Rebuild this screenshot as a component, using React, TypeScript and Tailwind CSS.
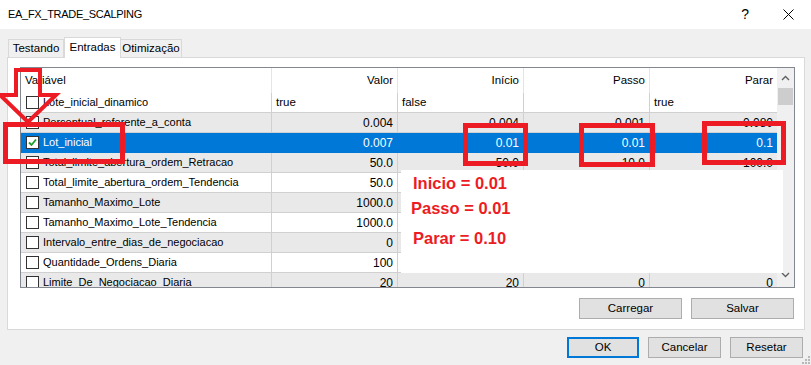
import React from "react";

type Row = {
  name: string;
  valor: string;
  inicio: string;
  passo: string;
  parar: string;
  bool?: boolean;
  checked?: boolean;
};

const ROWS: Row[] = [
  { name: "Lote_inicial_dinamico", valor: "true", inicio: "false", passo: "", parar: "true", bool: true },
  { name: "Percentual_referente_a_conta", valor: "0.004", inicio: "0.004", passo: "0.001", parar: "0.080" },
  { name: "Lot_inicial", valor: "0.007", inicio: "0.01", passo: "0.01", parar: "0.1", checked: true },
  { name: "Total_limite_abertura_ordem_Retracao", valor: "50.0", inicio: "50.0", passo: "10.0", parar: "100.0" },
  { name: "Total_limite_abertura_ordem_Tendencia", valor: "50.0", inicio: "50.0", passo: "10.0", parar: "100.0" },
  { name: "Tamanho_Maximo_Lote", valor: "1000.0", inicio: "1000.0", passo: "100.0", parar: "2000.0" },
  { name: "Tamanho_Maximo_Lote_Tendencia", valor: "1000.0", inicio: "1000.0", passo: "100.0", parar: "2000.0" },
  { name: "Intervalo_entre_dias_de_negociacao", valor: "0", inicio: "0", passo: "0", parar: "0" },
  { name: "Quantidade_Ordens_Diaria", valor: "100", inicio: "100", passo: "10", parar: "200" },
  { name: "Limite_De_Negociacao_Diaria", valor: "20", inicio: "20", passo: "0", parar: "0" },
];

function Checkbox({ checked }: { checked?: boolean }) {
  return (
    <div className="w-[13px] h-[13px] shrink-0 bg-white border border-[#333333] flex items-center justify-center">
      {checked && (
        <svg width="9" height="9" viewBox="0 0 9 9">
          <path d="M1 4.5 L3.5 7 L8 1.5" fill="none" stroke="#1e9e2a" strokeWidth="1.8" />
        </svg>
      )}
    </div>
  );
}

function Btn({ label, w, primary }: { label: string; w: string; primary?: boolean }) {
  return (
    <div
      className={`${w} h-[21px] flex items-center justify-center bg-[#e1e1e1] text-[11.5px] text-black ${
        primary ? "border-2 border-[#0078d7]" : "border border-[#adadad]"
      }`}
    >
      {label}
    </div>
  );
}

function ListView() {
  return (
    <div className="w-[775px] h-[221px] border border-[#828790] bg-white flex overflow-hidden">
      <div className="w-[756px] flex flex-col overflow-hidden">
        <div className="grid grid-cols-[251px_126px_126px_126px_127px] h-[25px] shrink-0 text-[11.5px]">
          <div className="border-r border-[#e5e5e5] pl-[4px] flex items-center">Variável</div>
          <div className="border-r border-[#e5e5e5] pr-[4px] flex items-center justify-end">Valor</div>
          <div className="border-r border-[#e5e5e5] pr-[4px] flex items-center justify-end">Início</div>
          <div className="border-r border-[#e5e5e5] pr-[4px] flex items-center justify-end">Passo</div>
          <div className="pr-[4px] flex items-center justify-end">Parar</div>
        </div>
        {ROWS.map((r, i) => {
          const sel = r.checked;
          const bg = sel ? "bg-[#0078d7] text-white" : i % 2 === 1 ? "bg-[#e9e9e9] text-black" : "bg-white text-black";
          const num = r.bool ? "justify-start pl-[4px] text-[11.5px]" : "justify-end pr-[4px]";
          const line = sel ? "border-[#0078d7]" : "border-[#d0d0d0]";
          return (
            <div
              key={r.name}
              className={`grid grid-cols-[251px_126px_126px_126px_127px] h-[20px] shrink-0 border-b ${line} ${bg}`}
            >
              <div className={`border-r ${line} pl-[5px] flex items-center gap-[4px] text-[11px]`}>
                <Checkbox checked={r.checked} />
                <span>{r.name}</span>
              </div>
              <div className={`border-r ${line} flex items-center ${num}`}>{r.valor}</div>
              <div className={`border-r ${line} flex items-center ${num}`}>{r.inicio}</div>
              <div className={`border-r ${line} flex items-center ${num}`}>{r.passo}</div>
              <div className={`flex items-center ${num}`}>{r.parar}</div>
            </div>
          );
        })}
      </div>
      <div className="w-[17px] bg-[#f0f0f0] flex flex-col items-center">
        <div className="h-[20px] flex items-center justify-center">
          <svg width="9" height="6" viewBox="0 0 9 6">
            <path d="M1 5 L4.5 1.5 L8 5" fill="none" stroke="#606060" strokeWidth="1.4" />
          </svg>
        </div>
        <div className="w-[15px] h-[17px] bg-[#cdcdcd]" />
        <div className="flex-1" />
        <div className="h-[18px] flex items-center justify-center mb-[3px]">
          <svg width="9" height="6" viewBox="0 0 9 6">
            <path d="M1 1 L4.5 4.5 L8 1" fill="none" stroke="#606060" strokeWidth="1.4" />
          </svg>
        </div>
      </div>
    </div>
  );
}

export default function App() {
  return (
    <div
      className="relative w-[811px] h-[365px] bg-[#f0f0f0] overflow-hidden text-[12px] text-black"
      style={{ fontFamily: '"Liberation Sans", Arial, sans-serif' }}
    >
      {/* Title bar */}
      <div className="h-[29px] bg-white flex items-center pl-[8px] pr-[17px]">
        <span className="text-[11px] tracking-[-0.3px]">EA_FX_TRADE_SCALPING</span>
        <div className="flex-1" />
        <span className="text-[14px] mr-[34px]">?</span>
        <svg width="11" height="11" viewBox="0 0 11 11">
          <path d="M0.5 0.5 L10.5 10.5 M10.5 0.5 L0.5 10.5" stroke="#000" strokeWidth="1" />
        </svg>
      </div>

      {/* Tabs */}
      <div className="pl-[7px] pt-[8px]">
        <div className="flex items-end h-[20px] pl-[1px] text-[11.5px]">
          <div className="w-[56px] h-[18px] flex items-center justify-center border border-b-0 border-[#d9d9d9] bg-[#f0f0f0]">
            Testando
          </div>
          <div className="relative z-10 w-[57px] h-[21px] -mb-px flex items-center justify-center border border-b-0 border-[#d9d9d9] bg-white">
            Entradas
          </div>
          <div className="w-[61px] h-[18px] flex items-center justify-center border border-b-0 border-l-0 border-[#d9d9d9] bg-[#f0f0f0] whitespace-nowrap">
            Otimização
          </div>
        </div>

        {/* Panel */}
        <div className="w-[798px] h-[273px] bg-white border border-[#d9d9d9] pl-[12px] pt-[9px] flex flex-col">
          <ListView />
          <div className="flex gap-[9px] mt-[10px] pl-[559px]">
            <Btn label="Carregar" w="w-[103px]" />
            <Btn label="Salvar" w="w-[103px]" />
          </div>
        </div>
      </div>

      {/* Dialog buttons */}
      <div className="flex gap-[9px] mt-[7px] pl-[567px]">
        <Btn label="OK" w="w-[72px]" primary />
        <Btn label="Cancelar" w="w-[73px]" />
        <Btn label="Resetar" w="w-[73px]" />
      </div>

      {/* Resize grip */}
      <div className="absolute right-[1px] bottom-[1px] grid grid-cols-3 gap-[1px]">
        {[0, 0, 1, 0, 1, 1, 1, 1, 1].map((v, i) => (
          <div key={i} className={`w-[2px] h-[2px] ${v ? "bg-[#b8b8b8]" : ""}`} />
        ))}
      </div>

      {/* Annotations */}
      <svg className="absolute left-0 top-[60px]" width="70" height="75" viewBox="0 60 70 75">
        <polygon
          points="16,70 40,70 40,95 56,95 28,122 0,95 16,95"
          fill="none"
          stroke="#ed1c24"
          strokeWidth="4"
          strokeLinejoin="miter"
        />
      </svg>
      <div className="absolute left-[3px] top-[122px] w-[122px] h-[42px] border-[5px] border-[#ed1c24]" />
      <div className="absolute left-[463px] top-[123px] w-[65px] h-[43px] border-[5px] border-[#ed1c24]" />
      <div className="absolute left-[579px] top-[123px] w-[76px] h-[44px] border-[5px] border-[#ed1c24]" />
      <div className="absolute left-[702px] top-[121px] w-[84px] h-[44px] border-[5px] border-[#ed1c24]" />

      <div className="absolute left-[401px] top-[170px] w-[382px] h-[103px] bg-white pl-[12px] pt-[3px] text-[16.5px] font-bold text-[#ed1c24] leading-[20px]">
        <div>Inicio = 0.01</div>
        <div className="mt-[5px] -ml-[2px]">Passo = 0.01</div>
        <div className="mt-[10px]">Parar = 0.10</div>
      </div>
    </div>
  );
}
